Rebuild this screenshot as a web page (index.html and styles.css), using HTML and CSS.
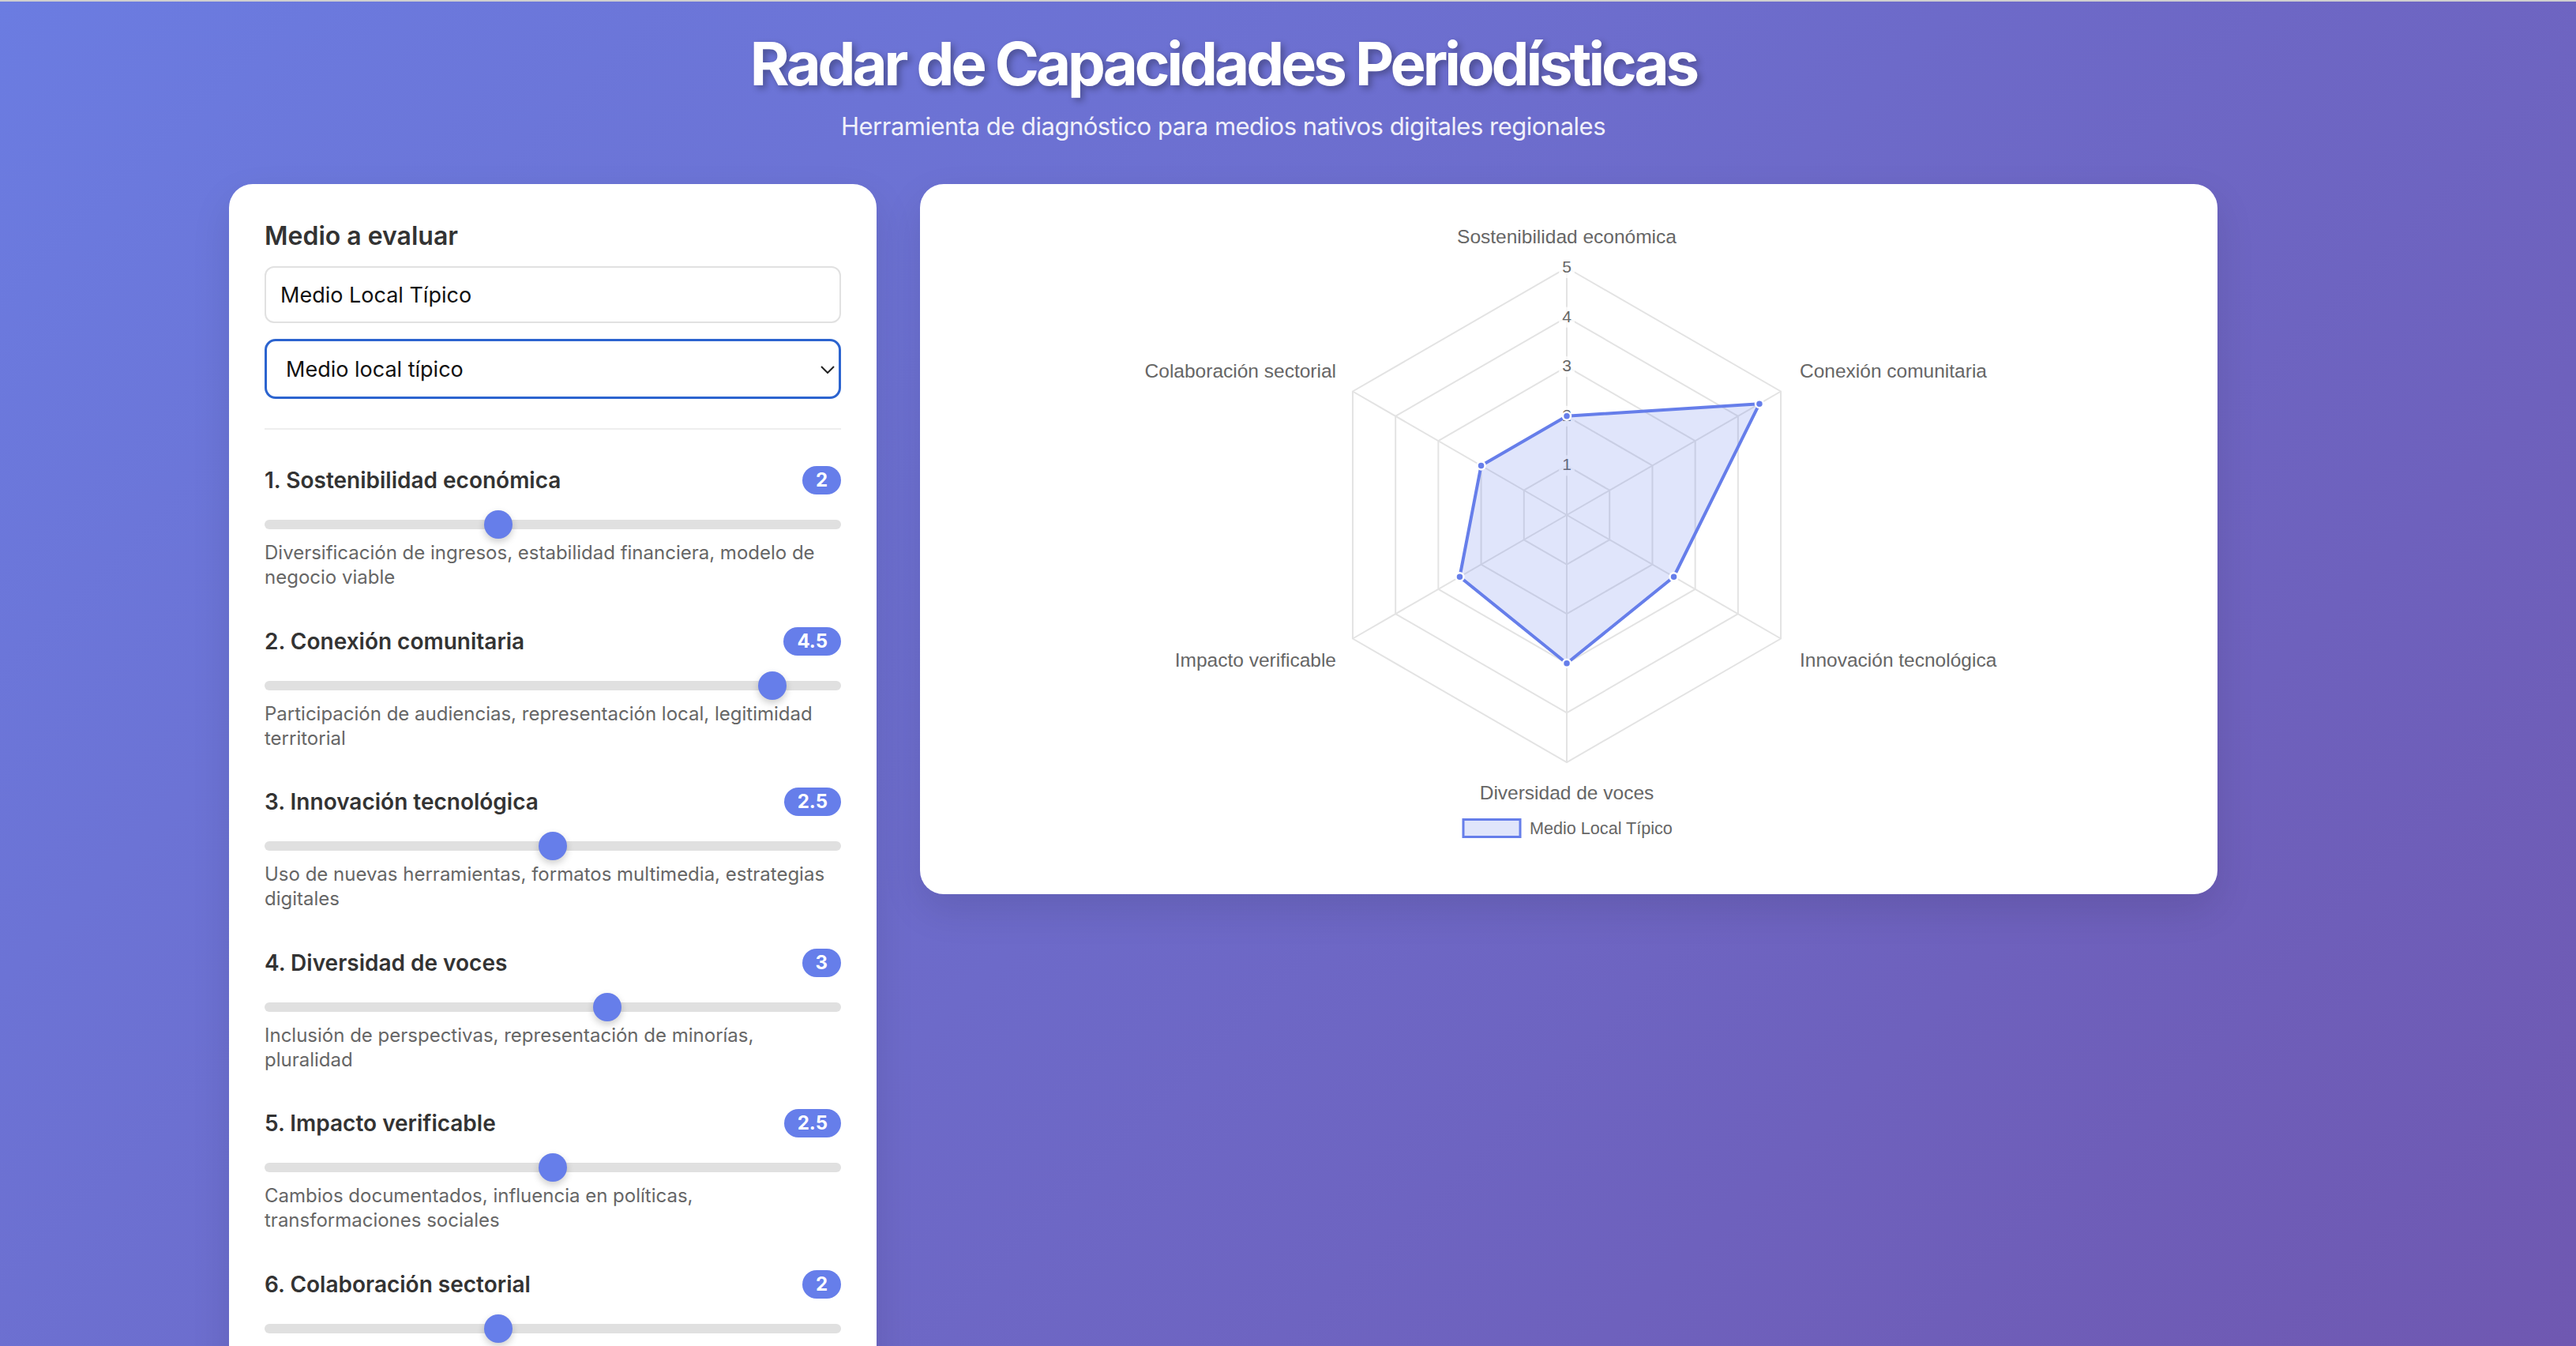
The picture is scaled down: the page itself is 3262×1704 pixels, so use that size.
FILE: index.html
```html
<!DOCTYPE html>
<html lang="es">
<head>
    <meta charset="UTF-8">
    <meta name="viewport" content="width=device-width, initial-scale=1.0">
    <title>Radar de Capacidades Periodísticas</title>
    <link rel="stylesheet" href="styles.css">
</head>
<body>

<div class="page">
    <header class="header">
        <h1>Radar de Capacidades Periodísticas</h1>
        <p>Herramienta de diagnóstico para medios nativos digitales regionales</p>
    </header>

    <div class="layout">
        <div class="panel controls">
            <h3>Medio a evaluar</h3>
            <input type="text" class="text-input" value="Medio Local Típico">
            <div class="select-wrap">
                <select class="preset">
                    <option>Medio local típico</option>
                    <option>Medio emergente</option>
                    <option>Medio consolidado</option>
                    <option>Personalizado</option>
                </select>
                <svg class="chevron" viewBox="0 0 18 10" width="18" height="10">
                    <path d="M1 1 L9 9 L17 1" fill="none" stroke="#222" stroke-width="2"/>
                </svg>
            </div>

            <div class="sliders">
                <div class="slider-group">
                    <div class="slider-head">
                        <span class="slider-label">1. Sostenibilidad económica</span>
                        <span class="badge">2</span>
                    </div>
                    <input type="range" class="range" min="0" max="5" step="0.5" value="2">
                    <p class="slider-desc">Diversificación de ingresos, estabilidad financiera, modelo de negocio viable</p>
                </div>

                <div class="slider-group">
                    <div class="slider-head">
                        <span class="slider-label">2. Conexión comunitaria</span>
                        <span class="badge">4.5</span>
                    </div>
                    <input type="range" class="range" min="0" max="5" step="0.5" value="4.5">
                    <p class="slider-desc">Participación de audiencias, representación local, legitimidad territorial</p>
                </div>

                <div class="slider-group">
                    <div class="slider-head">
                        <span class="slider-label">3. Innovación tecnológica</span>
                        <span class="badge">2.5</span>
                    </div>
                    <input type="range" class="range" min="0" max="5" step="0.5" value="2.5">
                    <p class="slider-desc">Uso de nuevas herramientas, formatos multimedia, estrategias digitales</p>
                </div>

                <div class="slider-group">
                    <div class="slider-head">
                        <span class="slider-label">4. Diversidad de voces</span>
                        <span class="badge">3</span>
                    </div>
                    <input type="range" class="range" min="0" max="5" step="0.5" value="3">
                    <p class="slider-desc">Inclusión de perspectivas, representación de minorías, pluralidad</p>
                </div>

                <div class="slider-group">
                    <div class="slider-head">
                        <span class="slider-label">5. Impacto verificable</span>
                        <span class="badge">2.5</span>
                    </div>
                    <input type="range" class="range" min="0" max="5" step="0.5" value="2.5">
                    <p class="slider-desc">Cambios documentados, influencia en políticas, transformaciones sociales</p>
                </div>

                <div class="slider-group">
                    <div class="slider-head">
                        <span class="slider-label">6. Colaboración sectorial</span>
                        <span class="badge">2</span>
                    </div>
                    <input type="range" class="range" min="0" max="5" step="0.5" value="2">
                    <p class="slider-desc">Alianzas con otros medios, redes de trabajo, proyectos conjuntos</p>
                </div>
            </div>
        </div>

        <div class="panel chart-card">
            <svg class="radar" width="1563" height="819" viewBox="1205 273 1563 819">
                <!-- grid -->
                <g class="grid">
                    <polygon points="1984,589.4 2038.21,620.7 2038.21,683.3 1984,714.6 1929.79,683.3 1929.79,620.7"/>
                    <polygon points="1984,526.8 2092.43,589.4 2092.43,714.6 1984,777.2 1875.57,714.6 1875.57,589.4"/>
                    <polygon points="1984,464.2 2146.64,558.1 2146.64,745.9 1984,839.8 1821.36,745.9 1821.36,558.1"/>
                    <polygon points="1984,401.6 2200.85,526.8 2200.85,777.2 1984,902.4 1767.15,777.2 1767.15,526.8"/>
                    <polygon points="1984,339 2255.07,495.5 2255.07,808.5 1984,965 1712.93,808.5 1712.93,495.5"/>
                    <line x1="1984" y1="652" x2="1984" y2="339"/>
                    <line x1="1984" y1="652" x2="2255.07" y2="495.5"/>
                    <line x1="1984" y1="652" x2="2255.07" y2="808.5"/>
                    <line x1="1984" y1="652" x2="1984" y2="965"/>
                    <line x1="1984" y1="652" x2="1712.93" y2="808.5"/>
                    <line x1="1984" y1="652" x2="1712.93" y2="495.5"/>
                </g>

                <!-- ticks -->
                <g class="ticks">
                    <rect x="1974" y="576.4" width="20" height="26"/>
                    <rect x="1974" y="513.8" width="20" height="26"/>
                    <rect x="1974" y="451.2" width="20" height="26"/>
                    <rect x="1974" y="388.6" width="20" height="26"/>
                    <rect x="1974" y="326" width="20" height="26"/>
                    <text x="1984" y="595.4">1</text>
                    <text x="1984" y="532.8">2</text>
                    <text x="1984" y="470.2">3</text>
                    <text x="1984" y="407.6">4</text>
                    <text x="1984" y="345">5</text>
                </g>

                <!-- dataset -->
                <polygon class="area" points="1984,526.8 2227.96,511.15 2119.53,730.25 1984,839.8 1848.47,730.25 1875.57,589.4"/>
                <g class="points">
                    <circle cx="1984" cy="526.8" r="5"/>
                    <circle cx="2227.96" cy="511.15" r="5"/>
                    <circle cx="2119.53" cy="730.25" r="5"/>
                    <circle cx="1984" cy="839.8" r="5"/>
                    <circle cx="1848.47" cy="730.25" r="5"/>
                    <circle cx="1875.57" cy="589.4" r="5"/>
                </g>

                <!-- point labels -->
                <g class="axis-labels">
                    <text x="1984" y="308" text-anchor="middle">Sostenibilidad económica</text>
                    <text x="2279" y="478">Conexión comunitaria</text>
                    <text x="2279" y="844">Innovación tecnológica</text>
                    <text x="1984" y="1012" text-anchor="middle">Diversidad de voces</text>
                    <text x="1692" y="844" text-anchor="end">Impacto verificable</text>
                    <text x="1692" y="478" text-anchor="end">Colaboración sectorial</text>
                </g>

                <!-- legend -->
                <g class="legend">
                    <rect x="1853" y="1037.5" width="72" height="22"/>
                    <text x="1937" y="1056">Medio Local Típico</text>
                </g>
            </svg>
        </div>
    </div>
</div>

</body>
</html>
```

FILE: styles.css
```css
body{
    margin:0;
    border-top:2px solid #cfcfcf;
    min-height:100vh;
    font-family:Inter, "Liberation Sans", sans-serif;
    color:#333;
    background:linear-gradient(135deg, #6b7ce1 0%, #6f58b1 100%) fixed;
}
.page{
    width:2518px;
    margin:0 0 0 290px;
}

/* header */
.header{
    text-align:center;
    color:white;
    padding-top:30px;
    margin-bottom:53px;
}
.header h1{
    margin:0;
    font-size:76px;
    line-height:96px;
    font-weight:700;
    letter-spacing:-4px;
    text-shadow:4px 4px 8px rgba(0, 0, 0, 0.3);
}
.header p{
    margin:12px 0 0;
    font-size:31px;
    line-height:40px;
    letter-spacing:-0.5px;
    opacity:0.9;
}

.layout{
    display:grid;
    grid-template-columns:820px 1fr;
    gap:55px;
    align-items:start;
}
.panel{
    background-color:white;
    border-radius:30px;
    box-shadow:0 20px 50px rgba(0, 0, 0, 0.1);
}

/* controls */
.controls{
    padding:47px 45px 45px;
}
.controls h3{
    margin:0 0 19px;
    font-size:32px;
    line-height:38px;
    font-weight:600;
    color:#333;
}
.text-input{
    display:block;
    width:100%;
    height:72px;
    box-sizing:border-box;
    padding:0 18px;
    border:2px solid #e1e1e1;
    border-radius:12px;
    font-family:inherit;
    font-size:27px;
    color:#111;
    outline:none;
}
.select-wrap{
    position:relative;
    margin-top:20px;
}
.preset{
    -webkit-appearance:none;
    appearance:none;
    display:block;
    width:100%;
    height:76px;
    box-sizing:border-box;
    padding:0 24px;
    border:3px solid #2c64cf;
    border-radius:14px;
    background-color:white;
    font-family:inherit;
    font-size:27px;
    color:#111;
    outline:none;
}
.chevron{
    position:absolute;
    right:8px;
    top:34px;
    pointer-events:none;
}

.sliders{
    margin-top:37px;
    border-top:2px solid #eee;
    padding-top:46px;
}
.slider-group{
    margin-bottom:47.5px;
}
.slider-head{
    display:flex;
    justify-content:space-between;
    align-items:center;
    height:36px;
}
.slider-label{
    font-size:28px;
    font-weight:600;
    color:#333;
}
.badge{
    background-color:#667eea;
    color:white;
    font-size:24px;
    font-weight:700;
    line-height:36px;
    padding:0 17px;
    border-radius:18px;
}
.range{
    -webkit-appearance:none;
    appearance:none;
    display:block;
    width:100%;
    height:12px;
    margin:32px 0 14px;
    background:#e0e0e0;
    border-radius:6px;
    outline:none;
}
.range::-webkit-slider-thumb{
    -webkit-appearance:none;
    appearance:none;
    width:36px;
    height:36px;
    border-radius:50%;
    background:#667eea;
    box-shadow:0 4px 10px rgba(0, 0, 0, 0.2);
    cursor:pointer;
}
.slider-desc{
    margin:0;
    font-size:24px;
    line-height:31px;
    color:#666;
}

/* chart */
.chart-card{
    padding:40px;
}
.radar{
    display:block;
    font-family:"Liberation Sans", Arial, sans-serif;
}
.grid polygon,
.grid line{
    fill:none;
    stroke:#e3e3e3;
    stroke-width:2;
}
.ticks rect{
    fill:white;
    fill-opacity:0.75;
}
.ticks text{
    font-size:21px;
    fill:#666;
    text-anchor:middle;
}
.area{
    fill:rgba(102, 126, 234, 0.2);
    stroke:#667eea;
    stroke-width:4;
    stroke-linejoin:round;
}
.points circle{
    fill:#667eea;
    stroke:white;
    stroke-width:2.5;
}
.axis-labels text{
    font-size:24.5px;
    fill:#666;
}
.legend rect{
    fill:rgba(102, 126, 234, 0.2);
    stroke:#667eea;
    stroke-width:3;
}
.legend text{
    font-size:21.6px;
    fill:#666;
}
```
